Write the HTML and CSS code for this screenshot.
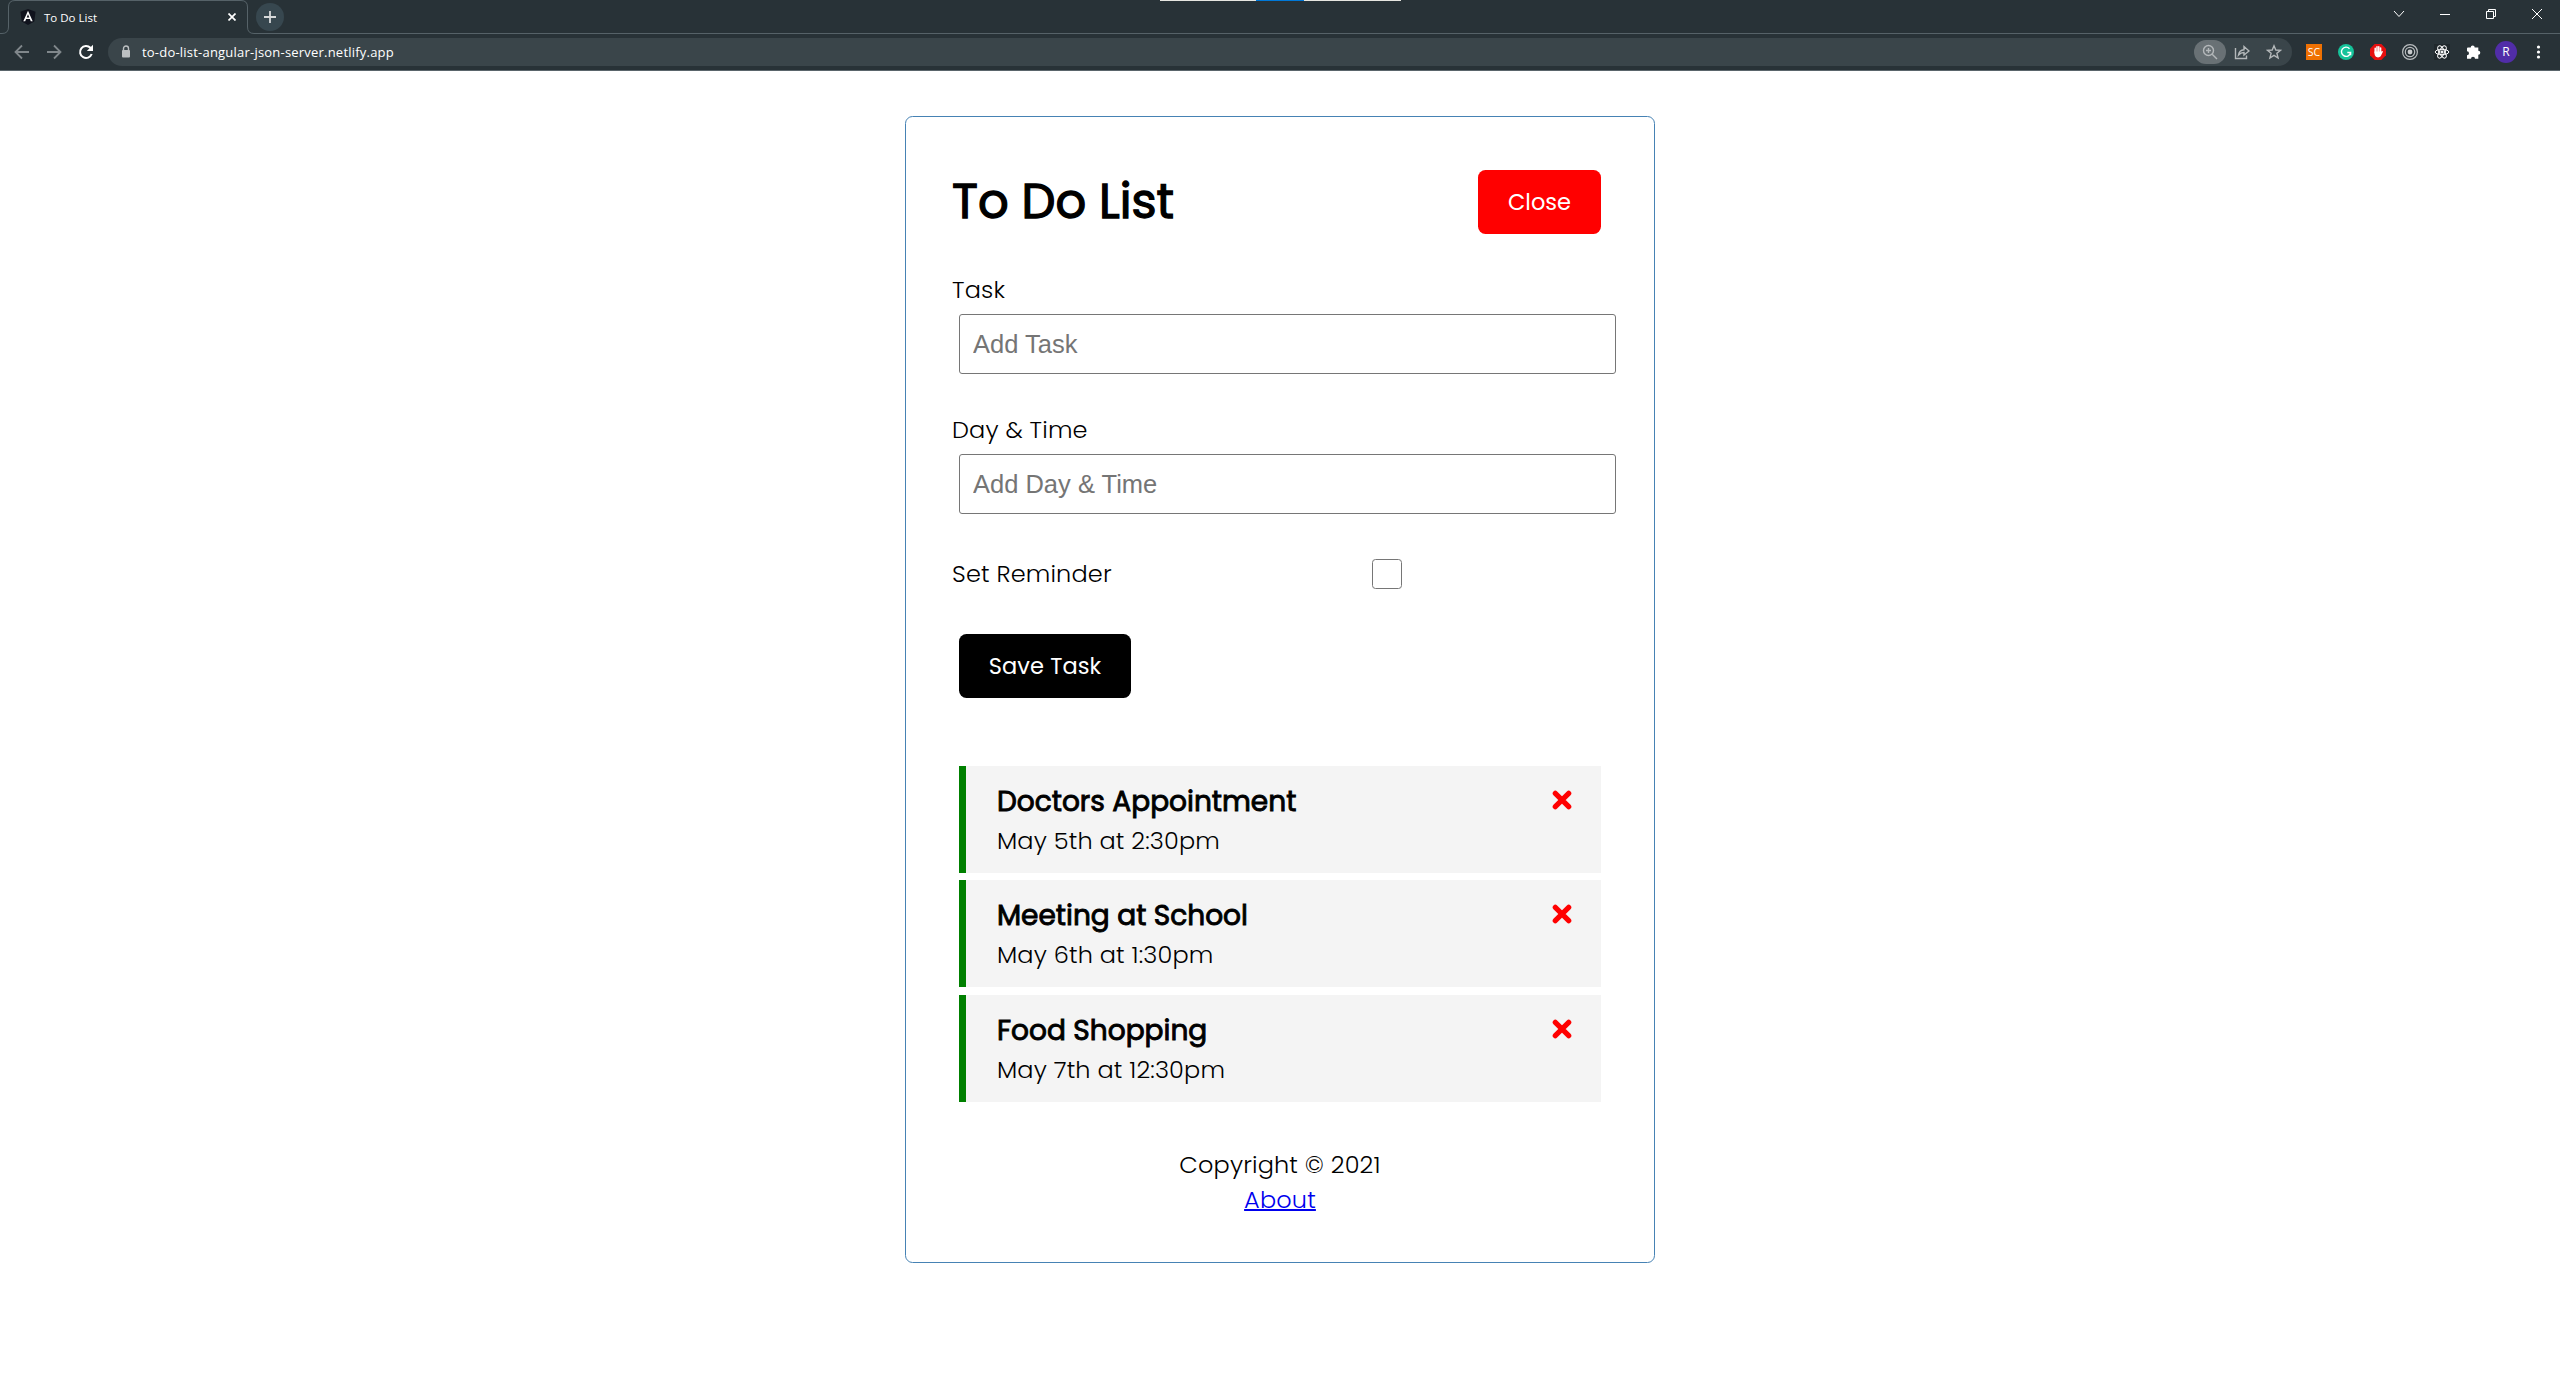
FILE: index.html
```html
<!DOCTYPE html>
<html lang="en">
<head>
<meta charset="utf-8">
<title>To Do List</title>
<link rel="stylesheet" href="styles.css">
</head>
<body>
<header class="browser">
  <div class="window-strip"></div>
  <div class="tabs">
    <svg class="tab-outline" width="258" height="34" viewBox="0 0 258 34"><path d="M0 33.5H2Q8.500 33.500 8.500 27V7Q8.500 .5 15 .5H241Q247.500 .5 247.500 7V27Q247.500 33.500 254 33.500H258"/></svg>
    <div class="tab">
      <svg class="favicon" width="16" height="16" viewBox="0 0 16 16"><path d="M8 0 15.500 2.700 14.300 12.500 8 16 1.700 12.500 .5 2.700Z" fill="#10131d"/><path d="M8 1.700 3.300 12.300H5.200L6.100 10H9.900L10.800 12.300H12.700ZM8 5.200 9.300 8.400H6.700Z" fill="#fff" fill-rule="evenodd"/></svg>
      <span class="tab-title">To Do List</span>
      <svg class="tab-close" width="8" height="8" viewBox="0 0 8 8"><path d="M.5 .5 7.500 7.500M7.500 .5 .5 7.500" stroke="#fff" stroke-width="1.700"/></svg>
    </div>
    <div class="new-tab"><svg width="12" height="12" viewBox="0 0 12 12"><path d="M6 0V12M0 6H12" stroke="#d6d8d9" stroke-width="1.800"/></svg></div>
    <div class="window-controls">
      <svg width="12" height="12" viewBox="0 0 12 12"><path d="M1 3 6 8.500 11 3"/></svg>
      <svg width="12" height="12" viewBox="0 0 12 12"><path d="M1 6.500H11"/></svg>
      <svg width="12" height="12" viewBox="0 0 12 12"><path d="M1.500 3.500H8.500V10.500H1.500ZM3.500 3.500V1.500H10.500V8.500H8.500"/></svg>
      <svg width="12" height="12" viewBox="0 0 12 12"><path d="M1 1 11 11M11 1 1 11"/></svg>
    </div>
  </div>
  <div class="toolbar">
    <svg class="nav-icon" width="16" height="16" viewBox="0 0 16 16"><path d="M15 8H2M8 1.500 1.500 8 8 14.500"/></svg>
    <svg class="nav-icon" width="16" height="16" viewBox="0 0 16 16"><path d="M1 8H14M8 1.500 14.500 8 8 14.500"/></svg>
    <svg class="nav-icon reload" width="16" height="16" viewBox="0 0 16 16"><path d="M13.700 10A6 6 0 1 1 12.400 3.800L14 5.500"/><path d="M15 .8V7H8.800Z" fill="#fff" stroke="none"/></svg>
    <div class="address">
      <svg width="10" height="14" viewBox="0 0 10 14"><path d="M2.500 6V3.500A2.500 2.500 0 0 1 7.500 3.500V6" fill="none" stroke="#bcc0c2" stroke-width="1.400"/><rect x="1" y="5" width="8" height="7.500" rx="1" fill="#bcc0c2"/></svg>
      <span class="url">to-do-list-angular-json-server.netlify.app</span>
      <div class="zoom-pill"><svg class="line-icon" width="16" height="16" viewBox="0 0 16 16"><circle cx="6.500" cy="6.500" r="5"/><path d="M10.200 10.200 15 15M6.500 4V9M4 6.500H9"/></svg></div>
      <svg class="line-icon share" width="16" height="16" viewBox="0 0 16 16"><path d="M1.500 4V14.500H12.500V11.500M4.500 11C5 7.500 7 6 10 5.800V2.500L15 7 10 11V8.500C7.500 8.500 6 9.300 4.500 11Z"/></svg>
      <svg class="line-icon star" width="16" height="16" viewBox="0 0 16 16"><path d="M8 1.800 9.800 6 14.500 6.300 10.900 9.300 12.100 14 8 11.400 3.900 14 5.100 9.300 1.500 6.300 6.200 6Z"/></svg>
    </div>
    <div class="extensions">
      <div class="ext-sc">SC</div>
      <svg width="16" height="16" viewBox="0 0 16 16"><circle cx="8" cy="8" r="8" fill="#15c39a"/><path d="M11.500 4.700A4.600 4.600 0 1 0 12.600 8.500H9.300M12.600 8.500V11.300" fill="none" stroke="#fff" stroke-width="1.400"/></svg>
      <svg width="16" height="16" viewBox="0 0 16 16"><path d="M4.700 0H11.300L16 4.700V11.300L11.300 16H4.700L0 11.300V4.700Z" fill="#e60f0f"/><path d="M5.200 9V4.200M7 8V2.800M8.800 8V2.800M10.600 8.500V4" stroke="#fff" stroke-width="1.500" stroke-linecap="round"/><path d="M4.500 7.500H11.300L12.500 7Q13.300 7.500 12.700 8.300L10.700 12.300Q9.800 13.400 8 13.400 5.400 13.400 4.700 11Z" fill="#fff"/></svg>
      <svg class="rings" width="16" height="16" viewBox="0 0 16 16"><circle cx="8" cy="8" r="7.400"/><circle cx="8" cy="8" r="4.700"/><circle cx="8" cy="8" r="2.400" fill="#c8cbcd" stroke="none"/></svg>
      <svg class="react" width="16" height="16" viewBox="0 0 16 16"><ellipse cx="8" cy="8" rx="6.800" ry="2.700"/><ellipse cx="8" cy="8" rx="6.800" ry="2.700" transform="rotate(60 8 8)"/><ellipse cx="8" cy="8" rx="6.800" ry="2.700" transform="rotate(120 8 8)"/><circle cx="8" cy="8" r="1.100" fill="#fff"/></svg>
      <svg width="16" height="16" viewBox="0 0 16 16"><path d="M2 3.500H4.700A2 2 0 1 1 8.700 3.500H12.300V6.800A2 2 0 1 1 12.300 10.800V14.700H9A2 2 0 0 0 5 14.700H1V11.200A2 2 0 0 0 1 7.200V4.500Q1 3.500 2 3.500Z" fill="#fff"/></svg>
      <div class="avatar">R</div>
      <svg width="16" height="16" viewBox="0 0 16 16" fill="#fff"><circle cx="8.500" cy="3" r="1.600"/><circle cx="8.500" cy="8" r="1.600"/><circle cx="8.500" cy="13" r="1.600"/></svg>
    </div>
  </div>
</header>
<main class="card">
  <div class="card-header">
    <h1 class="title">To Do List</h1>
    <button class="btn btn-close">Close</button>
  </div>
  <form class="add-form">
    <label class="label" for="task">Task</label>
    <input class="field" id="task" type="text" placeholder="Add Task">
    <label class="label label-next" for="day">Day &amp; Time</label>
    <input class="field" id="day" type="text" placeholder="Add Day &amp; Time">
    <div class="reminder">
      <label class="label" for="reminder">Set Reminder</label>
      <input class="check" id="reminder" type="checkbox">
    </div>
    <button class="btn btn-save" type="button">Save Task</button>
  </form>
  <section class="tasks">
    <article class="task">
      <div><h3 class="task-name">Doctors Appointment</h3><p class="task-day">May 5th at 2:30pm</p></div>
      <svg class="delete" width="20" height="20" viewBox="0 0 20 20"><path d="M3.300 3.300 16.700 16.700M16.700 3.300 3.300 16.700"/></svg>
    </article>
    <article class="task">
      <div><h3 class="task-name">Meeting at School</h3><p class="task-day">May 6th at 1:30pm</p></div>
      <svg class="delete" width="20" height="20" viewBox="0 0 20 20"><path d="M3.300 3.300 16.700 16.700M16.700 3.300 3.300 16.700"/></svg>
    </article>
    <article class="task task-last">
      <div><h3 class="task-name">Food Shopping</h3><p class="task-day">May 7th at 12:30pm</p></div>
      <svg class="delete" width="20" height="20" viewBox="0 0 20 20"><path d="M3.300 3.300 16.700 16.700M16.700 3.300 3.300 16.700"/></svg>
    </article>
  </section>
  <footer class="footer">
    <p>Copyright © 2021</p>
    <a class="about" href="#">About</a>
  </footer>
</main>
</body>
</html>
```
FILE: styles.css
```css
* { box-sizing: border-box; margin: 0; padding: 0; }
body {
  background: #fff;
  color: #000;
  font-family: Poppins, Inter, "Liberation Sans", sans-serif;
  font-size: 24px;
  font-weight: 300;
  letter-spacing: 0.16px;
}
svg { display: block; flex: none; }

.browser {
  position: relative;
  height: 71px;
  background: #283237;
  border-bottom: 1px solid #5a656b;
  font-family: "Open Sans", "Noto Sans", sans-serif;
  font-weight: 400;
  letter-spacing: 0;
}
.window-strip {
  position: absolute;
  left: 1160px;
  top: 0;
  width: 241px;
  height: 1px;
  background: linear-gradient(90deg, #e6e6e0 96px, #0078d7 96px 144px, #e6e6e0 144px);
}
.tabs {
  position: relative;
  display: flex;
  height: 34px;
  background: linear-gradient(#566268, #566268) 258px 33px / 100% 1px no-repeat;
}
.tab-outline { position: absolute; left: 0; top: 0; fill: none; stroke: #566268; }
.tab { display: flex; align-items: center; width: 248px; height: 34px; padding-left: 20px; }
.tab-title { margin-left: 8px; color: #fff; font-size: 11.500px; }
.tab-close { margin-left: auto; margin-right: 12px; }
.new-tab {
  display: flex;
  align-items: center;
  justify-content: center;
  width: 28px;
  height: 28px;
  margin: 3px 0 0 8px;
  border-radius: 50%;
  background: #37474f;
}
.window-controls { display: flex; gap: 34px; margin: 8px 17px 0 auto; fill: none; stroke: #fff; }
.toolbar { display: flex; align-items: center; height: 36px; padding-left: 14px; }
.nav-icon { margin-right: 16px; fill: none; stroke: #80878b; stroke-width: 1.800; }
.reload { margin-right: 14px; stroke: #fff; stroke-width: 2; }
.address {
  display: flex;
  align-items: center;
  width: 2184px;
  height: 28px;
  padding: 0 10px 0 13px;
  border-radius: 14px;
  background: #3a454a;
}
.url { margin-left: 11px; color: #fff; font-size: 13px; letter-spacing: 0.21px; }
.zoom-pill {
  display: flex;
  align-items: center;
  justify-content: center;
  width: 32px;
  height: 24px;
  margin-left: auto;
  border-radius: 12px;
  background: #697175;
}
.line-icon { fill: none; stroke: #b4b8ba; stroke-width: 1.400; }
.share { margin-left: 8px; }
.star { margin-left: 16px; }
.extensions { display: flex; align-items: center; gap: 16px; margin-left: 14px; }
.ext-sc { width: 16px; height: 16px; background: #ef7103; color: #fff; font-size: 10.500px; line-height: 16px; text-align: center; }
.rings { fill: none; stroke: #b9bdbf; stroke-width: 1.200; }
.react { fill: none; stroke: #fff; stroke-width: 1; background: #20282c; }
.avatar {
  width: 22px;
  height: 22px;
  margin: 0 -3px;
  border-radius: 50%;
  background: #512da8;
  color: #fff;
  font-size: 12px;
  line-height: 22px;
  text-align: center;
}

.card {
  width: 750px;
  height: 1147px;
  margin: 45px auto 0;
  padding: 53px 53px 0 46px;
  border: 1px solid steelblue;
  border-radius: 7.500px;
}
.card-header { display: flex; align-items: center; justify-content: space-between; margin-bottom: 38px; }
.title {
  font-size: 48px;
  font-weight: 400;
  line-height: 64px;
  letter-spacing: 0;
  -webkit-text-stroke: 1.300px #000;
}
.btn {
  height: 64px;
  border: 0;
  border-radius: 7.500px;
  color: #fff;
  font: inherit;
  font-size: 22.500px;
  font-weight: 400;
  text-align: center;
}
.btn-close { width: 123px; background: #f00; }
.btn-save { display: block; width: 172px; margin: 42px 0 0 7px; background: #000; letter-spacing: 0.1px; }
.label { display: block; line-height: 36px; }
.label-next { margin-top: 38px; }
.field {
  display: block;
  width: 657px;
  height: 60px;
  margin: 6px 0 0 7px;
  padding: 4px 13px;
  border: 1px solid #767676;
  border-radius: 3px;
  font: 25.500px "Liberation Sans", Arial, sans-serif;
}
.field::placeholder { color: #757575; }
.reminder { display: flex; align-items: center; height: 36px; margin-top: 42px; }
.check {
  appearance: none;
  width: 30px;
  height: 30px;
  margin-left: auto;
  margin-right: 199px;
  border: 1.500px solid #767676;
  border-radius: 3.500px;
  background: #fff;
}
.tasks { margin: 68px 0 0 7px; }
.task {
  display: flex;
  justify-content: space-between;
  height: 107px;
  margin-bottom: 7px;
  padding: 16px 29px 0 31px;
  border-left: 7px solid green;
  background: #f4f4f4;
}
.task-last { margin-top: 8px; margin-bottom: 0; }
.task-name {
  margin-bottom: 1px;
  font-size: 28px;
  font-weight: 400;
  line-height: 40px;
  letter-spacing: 0;
  -webkit-text-stroke: 0.900px #000;
}
.task-day { line-height: 36px; }
.delete { margin-top: 8px; stroke: #f00; stroke-width: 5.200; stroke-linecap: round; }
.footer { margin: 45px -7px 0 0; line-height: 35px; text-align: center; }
.about { color: #00e; text-decoration-thickness: 2px; }
```
